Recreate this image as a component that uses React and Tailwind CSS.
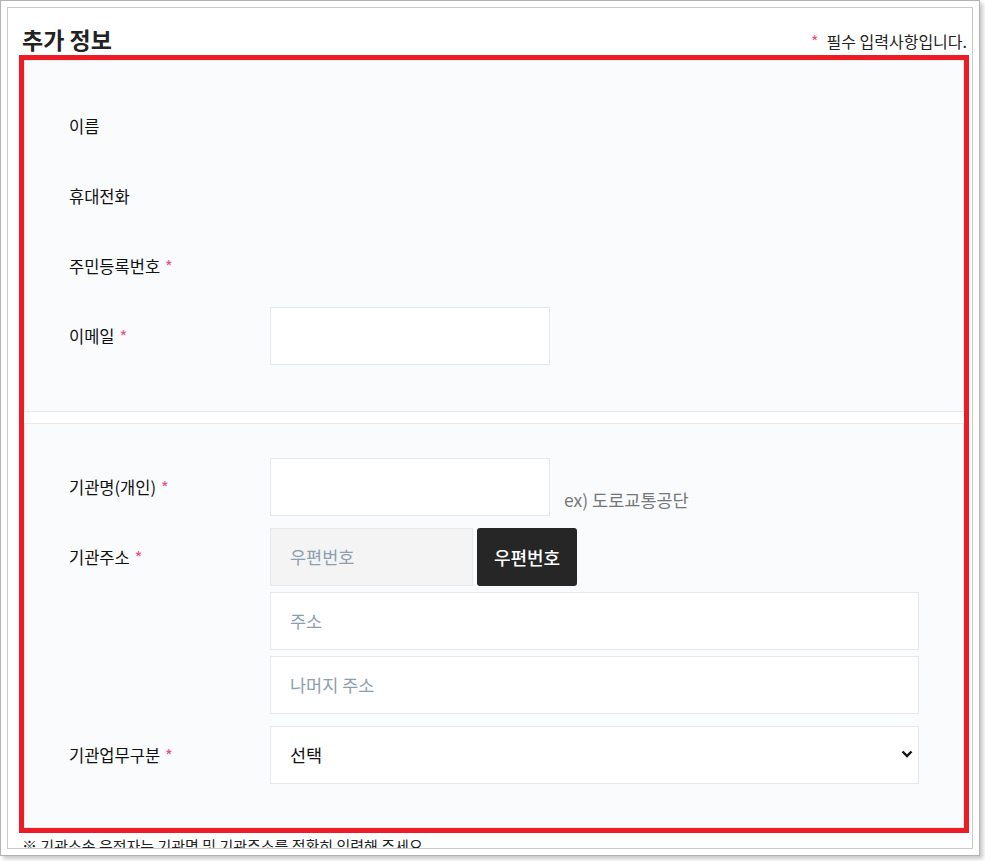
import React from "react";

const Star = () => <span className="text-[#e8508a] ml-[5px]">*</span>;

function Row({ label, req, children, h = "h-[58px]" }) {
  return (
    <div className={`flex items-center ${h}`}>
      <div className="w-[201px] shrink-0 text-[16.5px] text-[#111]">
        {label}
        {req && <Star />}
      </div>
      <div className="flex-1 flex h-full">{children}</div>
    </div>
  );
}

const inputCls =
  "h-[58px] border border-[#e4e9ee] bg-white flex items-center pl-[19px] text-[17.5px]";

export default function App() {
  return (
    <div className="w-[985px] h-[861px] bg-white font-['Noto_Sans_CJK_KR',sans-serif]">
      <div className="w-[980px] h-[856px] border border-[#b3b3b3] bg-white p-[6px] shadow-[3px_3px_4px_rgba(0,0,0,0.22)]">
        <div className="h-full border border-[#c9c9c9] overflow-hidden pl-[11px] pr-[3px]">
          <div className="h-[47px] flex items-end justify-between pb-[1px]">
            <h2 className="pl-[3px] text-[23px] font-semibold text-[#222] leading-[30px]">
              추가 정보
            </h2>
            <p className="text-[16px] text-[#222] mr-[2px] mb-[2px] leading-[22px]">
              <span className="text-[#e8508a] mr-[8px]">*</span>필수 입력사항입니다.
            </p>
          </div>

          <div className="border-[5px] border-[#ed1c24] bg-white">
            <section className="border border-[#e6eaee] bg-[#f9fbfd] pt-[36px] pb-[46px] px-[44px] flex flex-col gap-[12px]">
              <Row label="이름" />
              <Row label="휴대전화" />
              <Row label="주민등록번호" req />
              <Row label="이메일" req>
                <div className={`${inputCls} w-[280px]`} />
              </Row>
            </section>

            <section className="mt-[11px] border border-[#e6eaee] bg-[#f9fbfd] pt-[34px] pb-[43px] px-[44px] flex flex-col">
              <Row label="기관명(개인)" req>
                <div className={`${inputCls} w-[280px]`} />
                <span className="self-end ml-[14px] mb-[3px] text-[17.5px] leading-[26px] text-[#777]">
                  ex) 도로교통공단
                </span>
              </Row>
              <div className="mt-[12px]">
                <Row label="기관주소" req>
                  <div className={`${inputCls} w-[203px] !bg-[#f4f4f4] text-[#8d9fae]`}>
                    우편번호
                  </div>
                  <button className="ml-[4px] w-[100px] h-[58px] rounded-[3px] bg-[#262626] text-white text-[18px] font-medium">
                    우편번호
                  </button>
                </Row>
              </div>
              <div className="flex mt-[6px]">
                <div className="w-[201px] shrink-0" />
                <div className={`${inputCls} flex-1 text-[#8d9fae]`}>주소</div>
              </div>
              <div className="flex mt-[6px]">
                <div className="w-[201px] shrink-0" />
                <div className={`${inputCls} flex-1 text-[#8d9fae]`}>나머지 주소</div>
              </div>
              <div className="mt-[12px]">
                <Row label="기관업무구분" req>
                  <div className={`${inputCls} flex-1 justify-between pr-[5px] text-[#111]`}>
                    <span>선택</span>
                    <svg width="12" height="8" viewBox="0 0 12 8" className="mt-[-2px]">
                      <path d="M1.5 1.5 L6 6 L10.5 1.5" fill="none" stroke="#111" strokeWidth="2.4" />
                    </svg>
                  </div>
                </Row>
              </div>
            </section>
          </div>

          <p className="mt-[3px] pl-[3px] text-[15px] leading-[20px] text-[#222]">
            ※ 기관소속 운전자는 기관명 및 기관주소를 정확히 입력해 주세요.
          </p>
        </div>
      </div>
    </div>
  );
}
